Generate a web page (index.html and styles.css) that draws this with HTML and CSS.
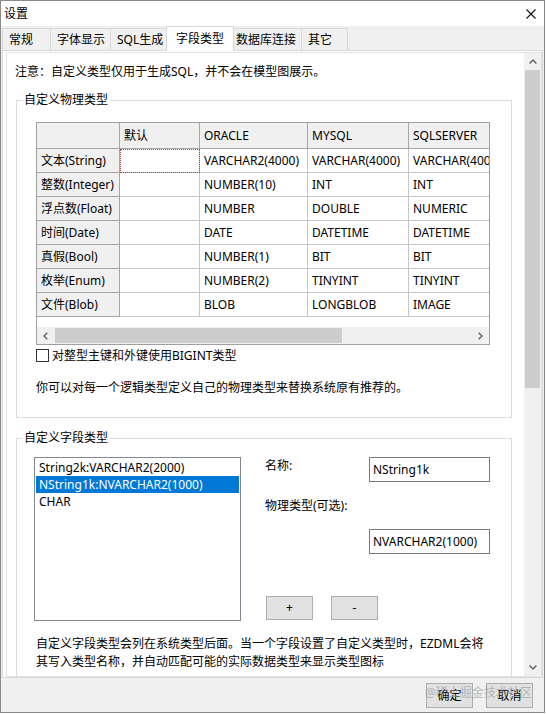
FILE: index.html
```html
<!DOCTYPE html>
<html lang="zh-CN">
<head>
<meta charset="utf-8">
<title>设置</title>
<link rel="stylesheet" href="styles.css">
</head>
<body>
<div class="window">
  <div class="titlebar">
    <span class="title">设置</span>
    <svg class="close" width="10" height="10" viewBox="0 0 10 10"><path d="M0.5 0.5 L9.5 9.5 M9.5 0.5 L0.5 9.5" stroke="#111" stroke-width="1.1" fill="none"/></svg>
  </div>
  <div class="tabs">
    <div class="tab t1">常规</div>
    <div class="tab t2">字体显示</div>
    <div class="tab t3">SQL生成</div>
    <div class="tab active">字段类型</div>
    <div class="tab t5">数据库连接</div>
    <div class="tab t6">其它</div>
  </div>
  <div class="panel">
    <div class="scrollbox">
      <div class="content">
        <p class="note">注意：自定义类型仅用于生成SQL，并不会在模型图展示。</p>
        <fieldset class="group">
          <legend>自定义物理类型</legend>
          <div class="g1-body">
            <div class="grid">
              <div class="cells">
                <div class="c fx"></div><div class="c fx">默认</div><div class="c fx">ORACLE</div><div class="c fx">MYSQL</div><div class="c fx">SQLSERVER</div>
                <div class="c fx">文本(String)</div><div class="c focus"></div><div class="c">VARCHAR2(4000)</div><div class="c">VARCHAR(4000)</div><div class="c">VARCHAR(4000)</div>
                <div class="c fx">整数(Integer)</div><div class="c"></div><div class="c">NUMBER(10)</div><div class="c">INT</div><div class="c">INT</div>
                <div class="c fx">浮点数(Float)</div><div class="c"></div><div class="c">NUMBER</div><div class="c">DOUBLE</div><div class="c">NUMERIC</div>
                <div class="c fx">时间(Date)</div><div class="c"></div><div class="c">DATE</div><div class="c">DATETIME</div><div class="c">DATETIME</div>
                <div class="c fx">真假(Bool)</div><div class="c"></div><div class="c">NUMBER(1)</div><div class="c">BIT</div><div class="c">BIT</div>
                <div class="c fx">枚举(Enum)</div><div class="c"></div><div class="c">NUMBER(2)</div><div class="c">TINYINT</div><div class="c">TINYINT</div>
                <div class="c fx">文件(Blob)</div><div class="c"></div><div class="c">BLOB</div><div class="c">LONGBLOB</div><div class="c">IMAGE</div>
              </div>
              <div class="gspacer"></div>
              <div class="hscroll">
                <div class="sbtn"><svg width="5" height="8" viewBox="0 0 5 8"><path d="M4.3 0.7 L1 4 L4.3 7.3" stroke="#606060" stroke-width="1.4" fill="none"/></svg></div>
                <div class="hthumb"></div>
                <div class="hfill"></div>
                <div class="sbtn"><svg width="5" height="8" viewBox="0 0 5 8"><path d="M0.7 0.7 L4 4 L0.7 7.3" stroke="#606060" stroke-width="1.4" fill="none"/></svg></div>
              </div>
            </div>
            <div class="check"><span class="box"></span><span>对整型主键和外键使用BIGINT类型</span></div>
            <p class="hint">你可以对每一个逻辑类型定义自己的物理类型来替换系统原有推荐的。</p>
          </div>
        </fieldset>
        <fieldset class="group g2">
          <legend>自定义字段类型</legend>
          <div class="g2-body">
            <div class="row">
              <div class="listbox">
                <div class="item">String2k:VARCHAR2(2000)</div>
                <div class="item sel">NString1k:NVARCHAR2(1000)</div>
                <div class="item">CHAR</div>
              </div>
              <div class="form">
                <div class="frow">
                  <span class="lbl">名称:</span>
                  <div class="field">NString1k</div>
                </div>
                <span class="lbl lbl2">物理类型(可选):</span>
                <div class="field field2">NVARCHAR2(1000)</div>
                <div class="btns">
                  <button class="btn">+</button>
                  <button class="btn">-</button>
                </div>
              </div>
            </div>
            <p class="desc">自定义字段类型会列在系统类型后面。当一个字段设置了自定义类型时，EZDML会将<br>其写入类型名称，并自动匹配可能的实际数据类型来显示类型图标</p>
          </div>
        </fieldset>
      </div>
      <div class="vscroll">
        <div class="vbtn"><svg width="8" height="5" viewBox="0 0 8 5"><path d="M0.6 4.4 L4 1 L7.4 4.4" stroke="#606060" stroke-width="1.4" fill="none"/></svg></div>
        <div class="vthumb"></div>
        <div class="vfill"></div>
        <div class="vbtn"><svg width="8" height="5" viewBox="0 0 8 5"><path d="M0.6 0.6 L4 4 L7.4 0.6" stroke="#606060" stroke-width="1.4" fill="none"/></svg></div>
      </div>
    </div>
  </div>
  <div class="footer">
    <button class="btn fbtn">确定</button>
    <button class="btn fbtn">取消</button>
  </div>
  <div class="watermark">@稀土掘金技术社区</div>
</div>
</body>
</html>
```
FILE: styles.css
```css
* { box-sizing: border-box; }
html, body { margin: 0; padding: 0; }
body {
  width: 546px;
  height: 714px;
  overflow: hidden;
  background: #ffffff;
  font-family: "Noto Sans", "Noto Sans CJK SC", sans-serif;
  font-size: 12px;
  color: #000;
}
.window {
  position: relative;
  width: 545px;
  height: 713px;
  border: 1px solid #8a8a8a;
  background: #f0f0f0;
  display: flex;
  flex-direction: column;
}
.titlebar {
  height: 25px;
  flex: none;
  background: #fff;
  display: flex;
  align-items: center;
  justify-content: space-between;
  padding: 0 8px 0 3px;
}
.title { line-height: 18px; }
.close { display: block; }

.tabs {
  height: 24px;
  flex: none;
  display: flex;
  align-items: flex-end;
  padding-left: 1px;
}
.tab {
  height: 22px;
  border: 1px solid #d9d9d9;
  border-bottom: none;
  background: #f0f0f0;
  padding: 1px 0 0 6px;
  line-height: 20px;
  margin-right: -1px;
  white-space: nowrap;
}
.t1 { width: 49px; }
.t2 { width: 61px; padding-left: 6px; }
.t3 { width: 59px; padding-left: 6px; }
.t5 { width: 71px; padding-left: 4px; }
.t6 { width: 47px; }
.tab.active {
  position: relative;
  z-index: 1;
  height: 25px;
  width: 68px;
  margin: 0 -3px -1px -2px;
  padding: 1px 0 0 9px;
  background: #fff;
  line-height: 22px;
}

.panel {
  height: 628px;
  flex: none;
  margin: 0 1px;
  border: 1px solid #d9d9d9;
  background: #fff;
  padding: 1px 0 0 3px;
}
.scrollbox {
  height: 625px;
  border: 1px solid #e3e3e3;
  display: flex;
}
.content {
  flex: 1;
  min-width: 0;
  overflow: hidden;
}
.vscroll {
  width: 17px;
  flex: none;
  background: #f0f0f0;
  display: flex;
  flex-direction: column;
}
.vbtn {
  height: 17px;
  flex: none;
  display: flex;
  align-items: center;
  justify-content: center;
}
.vthumb {
  height: 318px;
  flex: none;
  margin: 0 1px;
  background: #cdcdcd;
}
.vfill { flex: 1; }

.note {
  margin: 10px 0 0 8px;
  line-height: 18px;
}
.group {
  margin: 11px 12px 0 9px;
  padding: 0;
  border: 1px solid #dcdcdc;
  min-width: 0;
}
.group legend {
  margin-left: 5px;
  padding: 0 2px;
  line-height: 16px;
}
.g1-body { padding: 14px 0 20px 19px; }
.grid {
  width: 454px;
  border: 1px solid #a0a0a0;
  overflow: hidden;
  background: #fff;
}
.cells {
  width: 472px;
  display: grid;
  grid-template-columns: 83px 80px 108px 101px 100px;
  grid-template-rows: 26px repeat(7, 24px);
}
.c {
  border-right: 1px solid #c6c6c6;
  border-bottom: 1px solid #c6c6c6;
  padding-left: 4px;
  line-height: 23px;
  white-space: nowrap;
  overflow: hidden;
}
.c.fx {
  background: #f0f0f0;
  border-color: #a6a6a6;
}
.cells > .c:nth-child(-n+5) { line-height: 25px; }
.c.focus {
  outline: 1px dotted #b4403c;
  outline-offset: -1px;
}
.gspacer { height: 10px; }
.hscroll {
  height: 17px;
  display: flex;
  background: #f0f0f0;
}
.sbtn {
  width: 17px;
  flex: none;
  display: flex;
  align-items: center;
  justify-content: center;
}
.hthumb {
  width: 287px;
  flex: none;
  margin: 1px 0 1px 1px;
  background: #cdcdcd;
}
.hfill { flex: 1; }
.check {
  margin-top: 4px;
  height: 13px;
  display: flex;
  align-items: center;
  gap: 3px;
  line-height: 13px;
}
.box {
  width: 13px;
  height: 13px;
  border: 1px solid #333;
  background: #fff;
  flex: none;
}
.hint {
  margin: 17px 0 0;
  line-height: 18px;
}

.g2 { margin-top: 12px; }
.g2-body { padding: 11px 0 40px 17px; }
.row { display: flex; }
.listbox {
  width: 207px;
  height: 164px;
  border: 1px solid #828790;
  background: #fff;
  padding-top: 1px;
  flex: none;
}
.item {
  margin: 0 1px;
  padding-left: 3px;
  line-height: 17px;
  white-space: nowrap;
}
.item.sel {
  background: #0078d7;
  color: #fff;
}
.form {
  margin-left: 24px;
  width: 225px;
  display: flex;
  flex-direction: column;
}
.frow {
  display: flex;
  justify-content: space-between;
  align-items: flex-start;
}
.lbl { line-height: 18px; }
.lbl2 { margin-top: 15px; }
.field {
  width: 121px;
  height: 25px;
  border: 1px solid #7a7a7a;
  background: #fff;
  padding-left: 3px;
  line-height: 23px;
  white-space: nowrap;
  overflow: hidden;
}
.field2 {
  margin-top: 14px;
  align-self: flex-end;
}
.btns {
  margin: 42px 0 0 1px;
  display: flex;
  gap: 18px;
}
.btn {
  font: inherit;
  color: #000;
  width: 47px;
  height: 24px;
  padding: 0;
  border: 1px solid #adadad;
  background: #e1e1e1;
  line-height: 20px;
}
.desc {
  margin: 14px 0 0 2px;
  line-height: 18px;
}

.footer {
  height: 34px;
  flex: none;
  display: flex;
  justify-content: flex-end;
  align-items: flex-start;
  padding: 5px 11px 0 0;
  gap: 13px;
}
.fbtn { height: 25px; }
.watermark {
  position: absolute;
  left: 424px;
  top: 683px;
  font-size: 12px;
  line-height: 18px;
  color: rgba(150, 150, 150, 0.6);
  white-space: nowrap;
  pointer-events: none;
}
```
